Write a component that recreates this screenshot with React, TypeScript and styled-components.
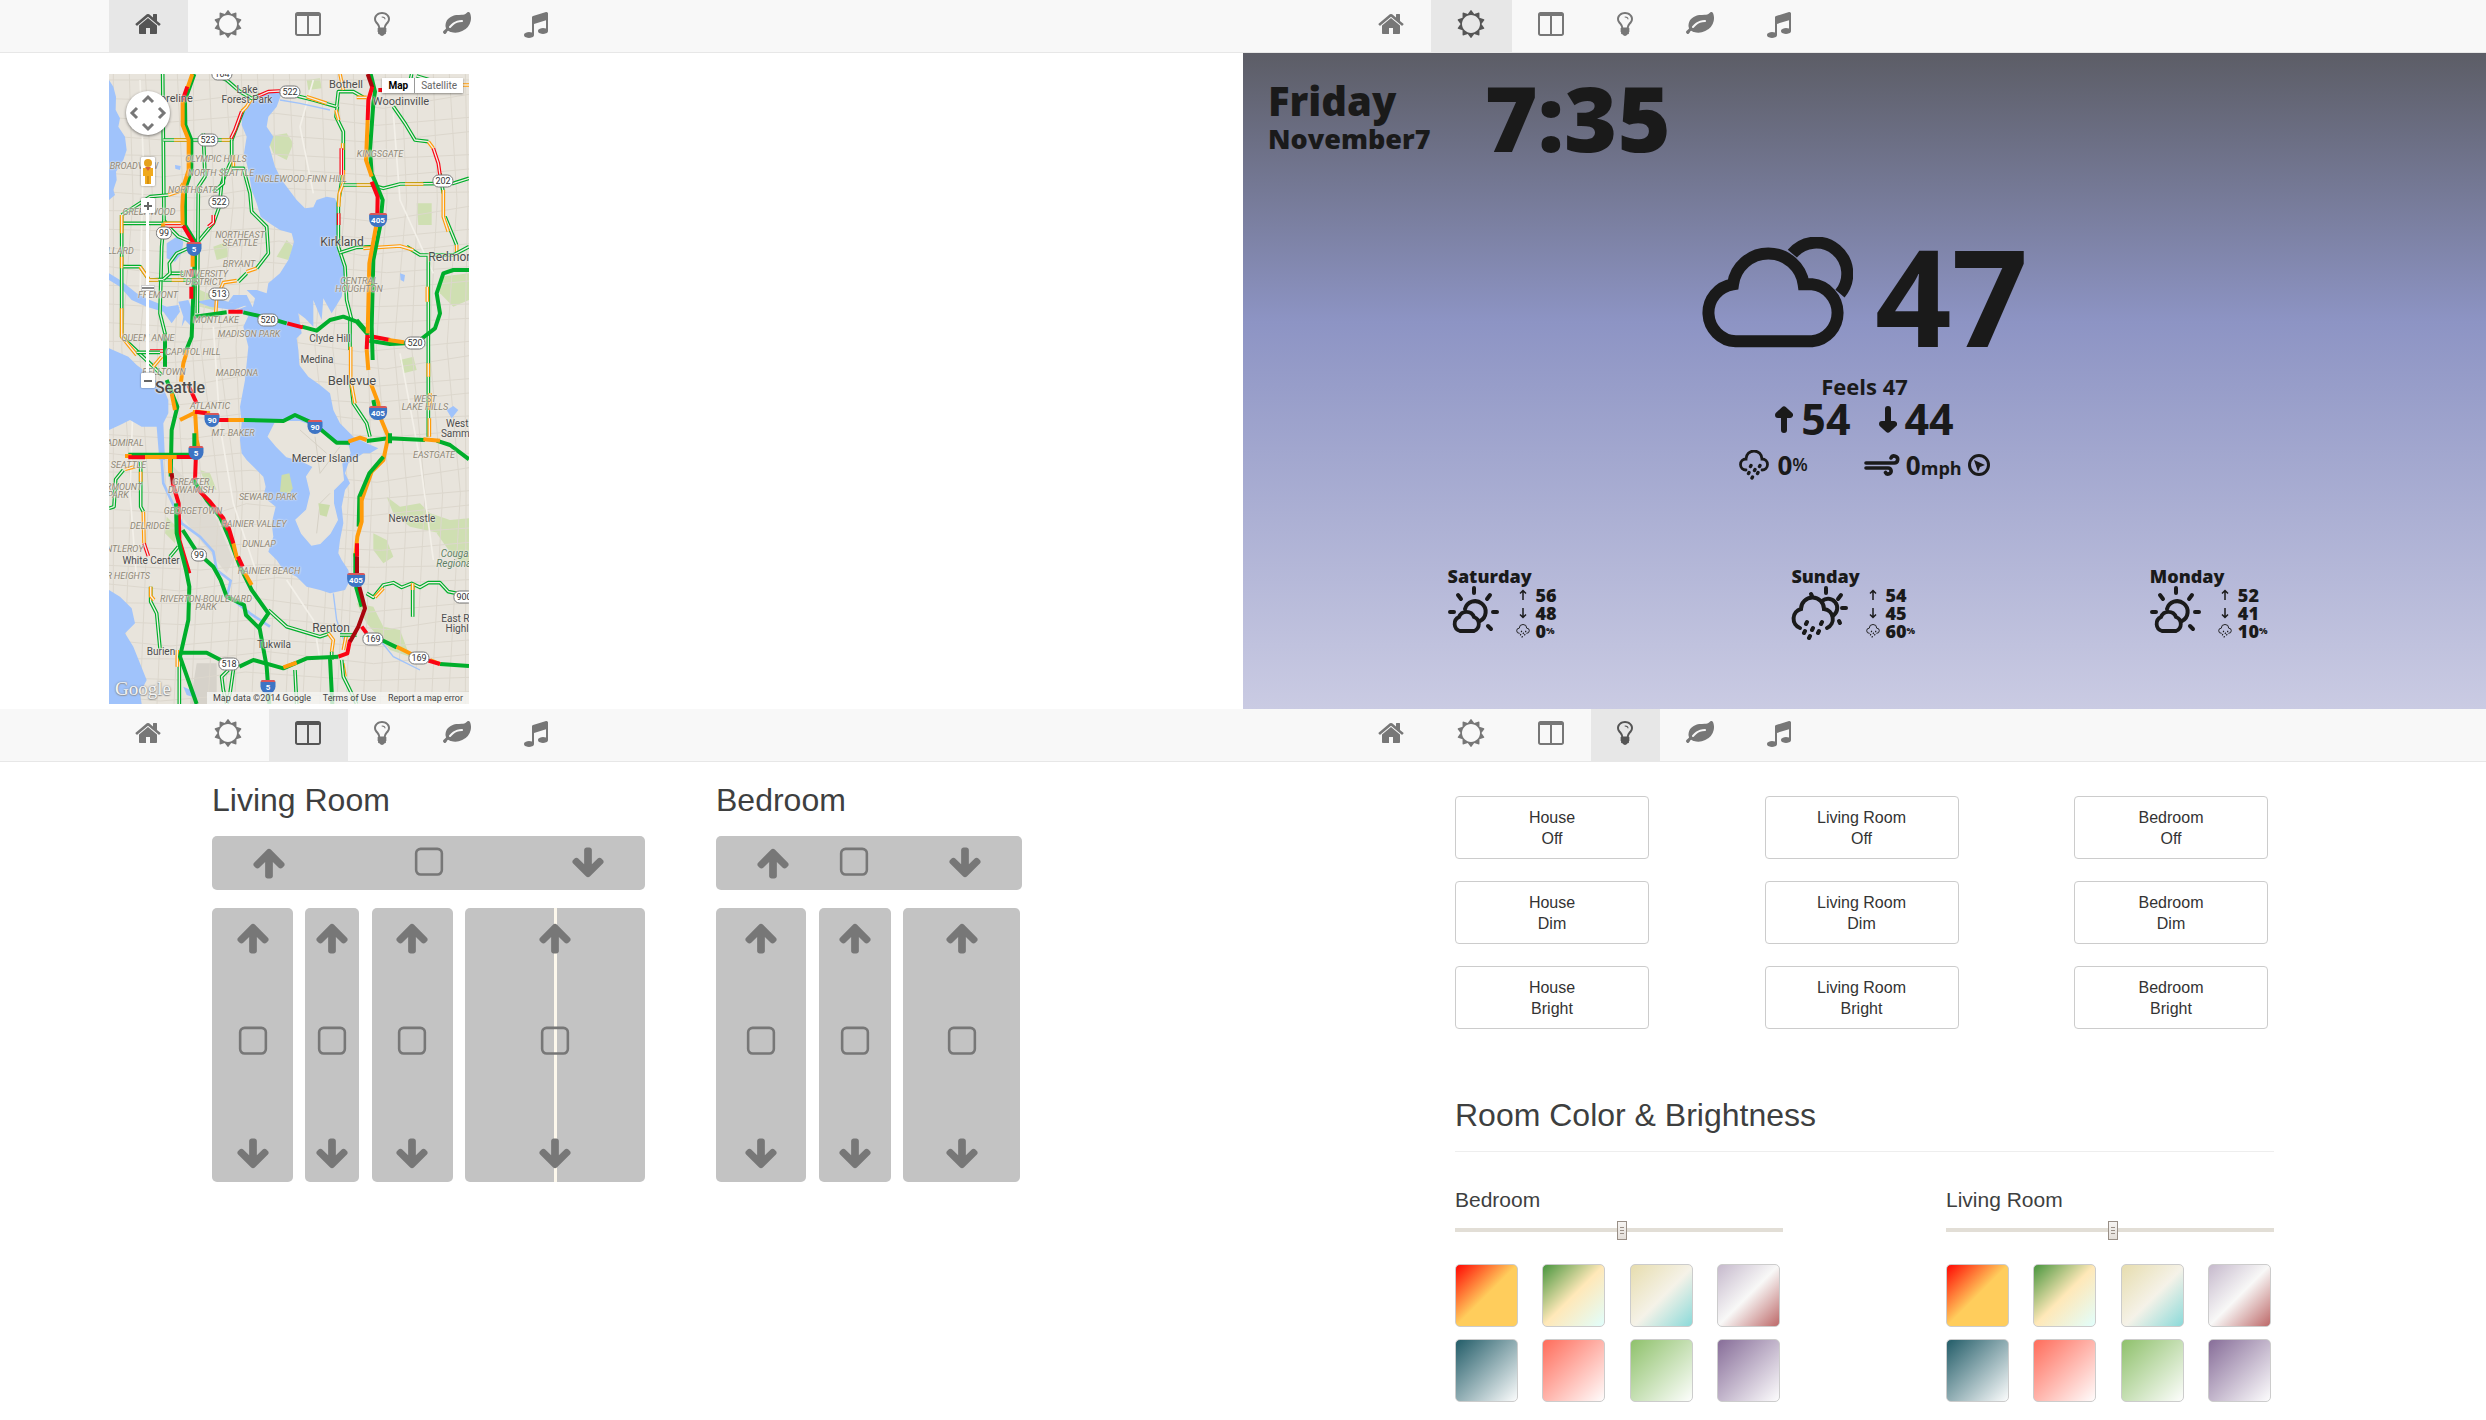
import React from "react";
import styled, { createGlobalStyle } from "styled-components";

const GlobalStyle = createGlobalStyle`
  *, *::before, *::after { box-sizing: border-box; }
  body {
    margin: 0;
    background: #fff;
    color: #3e3f3f;
    font-family: "Liberation Sans", Arial, sans-serif;
    font-size: 16px;
  }
  button { font: inherit; color: inherit; cursor: pointer; }
  h2, h3, p { margin: 0; font-weight: 400; }
`;

/* ---------- shared glyphs (1792-unit icon grid) ---------- */

const glyphs = {
  home: "M1472 992v480q0 26-19 45t-45 19h-384v-384h-256v384h-384q-26 0-45-19t-19-45v-480q0-1 .5-3t.5-3l575-474 575 474q1 2 1 6zm223-69l-62 74q-8 9-21 11h-3q-13 0-21-7l-692-577-692 577q-12 8-24 7-13-2-21-11l-62-74q-8-10-7-23.5t11-21.5l719-599q32-26 76-26t76 26l244 204v-195q0-14 9-23t23-9h192q14 0 23 9t9 23v408l219 182q10 8 11 21.5t-7 23.5z",
  sun: "M1472 896q0-117-45.5-223.5t-123-184-184-123-223.5-45.5-223.5 45.5-184 123-123 184-45.5 223.5 45.5 223.5 123 184 184 123 223.5 45.5 223.5-45.5 184-123 123-184 45.5-223.5zm276 277q-4 15-20 20l-292 96v306q0 16-13 26-15 10-29 4l-292-94-180 248q-10 13-26 13t-26-13l-180-248-292 94q-14 6-29-4-13-10-13-26v-306l-292-96q-16-5-20-20-5-17 4-29l180-248-180-248q-9-13-4-29 4-15 20-20l292-96v-306q0-16 13-26 15-10 29-4l292 94 180-248q9-12 26-12t26 12l180 248 292-94q14-6 29 4 13 10 13 26v306l292 96q16 5 20 20 5 16-4 29l-180 248 180 248q9 12 4 29z",
  columns: "M224 1536h608v-1152h-640v1120q0 13 9.5 22.5t22.5 9.5zm1376-32v-1120h-640v1152h608q13 0 22.5-9.5t9.5-22.5zm128-1216v1216q0 66-47 113t-113 47h-1344q-66 0-113-47t-47-113v-1216q0-66 47-113t113-47h1344q66 0 113 47t47 113z",
  bulb: "M1120 576q0 13-9.5 22.5t-22.5 9.5-22.5-9.5-9.5-22.5q0-46-54-71t-106-25q-13 0-22.5-9.5t-9.5-22.5 9.5-22.5 22.5-9.5q50 0 99.5 16t87 54 37.5 90zm160 0q0-72-34.5-134t-90-101.5-123-62-136.5-22.5-136.5 22.5-123 62-90 101.5-34.5 134q0 101 68 180 10 11 30.5 33t30.5 33q128 153 141 298h228q13-145 141-298 10-11 30.5-33t30.5-33q68-79 68-180zm128 0q0 155-103 268-45 49-74.5 87t-59.5 95.5-34 107.5q47 28 47 82 0 37-25 64 25 27 25 64 0 52-45 81 13 23 13 47 0 46-31.5 71t-77.5 25q-20 44-60 70t-87 26-87-26-60-70q-46 0-77.5-25t-31.5-71q0-24 13-47-45-29-45-81 0-37 25-64-25-27-25-64 0-54 47-82-4-50-34-107.5t-59.5-95.5-74.5-87q-103-113-103-268 0-99 44.5-184.5t117-142 164-89 186.5-32.5 186.5 32.5 164 89 117 142 44.5 184.5z",
  leaf: "M1280 704q0-26-19-45t-45-19q-172 0-318 49.5t-259.5 134-235.5 219.5q-19 21-19 45 0 26 19 45t45 19q24 0 45-19 27-24 74-71t67-66q137-124 268.5-176t313.5-52q26 0 45-19t19-45zm512-198q0 95-20 193-46 224-184.5 383t-357.5 268q-214 108-438 108-148 0-286-47-15-5-88-42t-96-37q-16 0-39.5 32t-45 70-52.5 70-60 32q-43 0-63.5-17.5t-45.5-59.5q-2-4-6-11t-5.5-10-3-9.5-1.5-13.5q0-35 31-73.5t68-65.5 68-56 31-48q0-4-14-38t-16-44q-9-51-9-104 0-115 43.5-220t119-184.5 170.5-139 204-95.5q55-18 145-25.5t179.5-9 178.5-6 163.5-24 113.5-56.5l29.5-29.5 29.5-28 27-20 36.5-16 43.5-4.5q39 0 70.5 46t47.5 112 24 124 8 96z",
  music: "M1664 224v1120q0 50-34 89t-86 60.5-103.5 32-96.5 10.5-96.5-10.5-103.5-32-86-60.5-34-89 34-89 86-60.5 103.5-32 96.5-10.5q105 0 192 39v-537l-768 237v709q0 50-34 89t-86 60.5-103.5 32-96.5 10.5-96.5-10.5-103.5-32-86-60.5-34-89 34-89 86-60.5 103.5-32 96.5-10.5q105 0 192 39v-967q0-31 19-56.5t49-35.5l832-256q12-4 28-4 40 0 68 28t28 68z",
  up: "M1675 971q0 51-37 90l-75 75q-38 38-91 38-54 0-90-38l-294-293v704q0 52-37.5 84.5t-90.5 32.5h-128q-53 0-90.5-32.5t-37.5-84.5v-704l-294 293q-36 38-90 38t-90-38l-75-75q-38-38-38-90 0-53 38-91l651-651q35-37 90-37 54 0 91 37l651 651q37 39 37 91z",
  down: "M1675 832q0 53-37 90l-651 652q-39 37-91 37-53 0-90-37l-651-652q-38-36-38-90 0-53 38-91l74-75q39-37 91-37 53 0 90 37l294 294v-704q0-52 38-90t90-38h128q52 0 90 38t38 90v704l294-294q37-37 90-37 52 0 91 37l75 75q37 39 37 91z",
  stop: "M1312 256h-832q-66 0-113 47t-47 113v832q0 66 47 113t113 47h832q66 0 113-47t47-113v-832q0-66-47-113t-113-47zm288 160v832q0 119-84.5 203.5t-203.5 84.5h-832q-119 0-203.5-84.5t-84.5-203.5v-832q0-119 84.5-203.5t203.5-84.5h832q119 0 203.5 84.5t84.5 203.5z",
};

type GlyphName = keyof typeof glyphs;

const Glyph = ({ name, size }: { name: GlyphName; size: number }) => (
  <svg width={size} height={size} viewBox="0 0 1792 1792" fill="currentColor" aria-hidden="true">
    <path d={glyphs[name]} />
  </svg>
);

/* ---------- page and navigation ---------- */

const Page = styled.main`
  display: grid;
  grid-template-columns: minmax(0, 1fr) minmax(0, 1fr);
  grid-template-rows: auto auto;
`;

const Panel = styled.section`
  display: flex;
  flex-direction: column;
`;

const NavBar = styled.nav`
  display: flex;
  padding-left: 109px;
  background: #f8f8f8;
  border-bottom: 1px solid #e7e7e7;
`;

const NavLink = styled.a<{ $active: boolean; $width: number }>`
  display: flex;
  justify-content: center;
  width: ${(p) => p.$width}px;
  padding: 10px 2px 14px 0;
  color: ${(p) => (p.$active ? "#555" : "#777")};
  background: ${(p) => (p.$active ? "#e7e7e7" : "transparent")};
`;

const navItems: { name: GlyphName; label: string; width: number }[] = [
  { name: "home", label: "Home", width: 79 },
  { name: "sun", label: "Weather", width: 81 },
  { name: "columns", label: "Shades", width: 79 },
  { name: "bulb", label: "Lights", width: 69 },
  { name: "leaf", label: "Climate", width: 81 },
  { name: "music", label: "Music", width: 77 },
];

const Nav = ({ active }: { active: GlyphName }) => (
  <NavBar>
    {navItems.map((item) => (
      <NavLink
        key={item.name}
        href={`#${item.name}`}
        aria-label={item.label}
        $active={item.name === active}
        $width={item.width}
      >
        <Glyph name={item.name} size={28} />
      </NavLink>
    ))}
  </NavBar>
);

/* ---------- traffic map ---------- */

const MapFrame = styled.div`
  position: relative;
  width: 360px;
  height: 630px;
  margin: 21px 0 5px 109px;
  overflow: hidden;
  background: #e8e4dc;
  font-family: Roboto, sans-serif;
`;

const MapDrawing = styled.svg`
  display: block;
  width: 100%;
  height: 100%;
`;

const Halo = "0 0 2px #f1eee8, 0 0 2px #f1eee8, 0 0 1px #f1eee8";

const PlaceLabel = styled.span<{ $x: number; $y: number; $size: number }>`
  position: absolute;
  left: ${(p) => p.$x}px;
  top: ${(p) => p.$y}px;
  transform: translate(-50%, -50%);
  color: #4c4c4c;
  font-size: ${(p) => p.$size}px;
  font-weight: ${(p) => (p.$size > 14 ? 500 : 400)};
  line-height: ${(p) => p.$size}px;
  text-align: center;
  text-shadow: ${Halo};
  white-space: pre;
`;

const HoodLabel = styled(PlaceLabel)`
  color: #8d8675;
  font-style: italic;
  line-height: 8px;
`;

const ParkLabel = styled(PlaceLabel)`
  color: #5d8064;
  font-style: italic;
`;

const StateShield = styled.span<{ $x: number; $y: number }>`
  position: absolute;
  left: ${(p) => p.$x}px;
  top: ${(p) => p.$y}px;
  transform: translate(-50%, -50%);
  padding: 0 2px;
  border: 1px solid #777;
  border-radius: 6px;
  background: #fff;
  color: #333;
  font-size: 9px;
  line-height: 11px;
  text-align: center;
`;

const InterstateShield = styled.span<{ $x: number; $y: number }>`
  position: absolute;
  left: ${(p) => p.$x}px;
  top: ${(p) => p.$y}px;
  transform: translate(-50%, -50%);
  min-width: 15px;
  padding: 1px 2px;
  border-top: 2px solid #d8575b;
  border-radius: 2px 2px 8px 8px;
  background: #3d74c4;
  color: #fff;
  font-size: 8px;
  font-weight: 700;
  line-height: 10px;
  text-align: center;
`;

const MapTypes = styled.div`
  position: absolute;
  top: 4px;
  right: 6px;
  display: flex;
  box-shadow: 0 1px 2px rgba(0, 0, 0, 0.4);
`;

const MapType = styled.button<{ $active: boolean }>`
  height: 15px;
  padding: 0 6px;
  border: 0;
  border-left: ${(p) => (p.$active ? "0" : "1px solid #999")};
  background: #fff;
  color: ${(p) => (p.$active ? "#000" : "#666")};
  font-size: 10px;
  font-weight: ${(p) => (p.$active ? 700 : 400)};
  line-height: 15px;
`;

const MapControls = styled.div`
  position: absolute;
  top: 17px;
  left: 17px;
  display: flex;
  flex-direction: column;
  align-items: center;
  width: 44px;
`;

const PanWheel = styled.button`
  display: block;
  width: 44px;
  height: 44px;
  margin-bottom: 22px;
  padding: 0;
  border: 0;
  border-radius: 50%;
  background: #fff;
  box-shadow: 0 1px 3px rgba(0, 0, 0, 0.5);
`;

const ControlButton = styled.button<{ $tall?: boolean }>`
  display: flex;
  align-items: center;
  justify-content: center;
  width: 14px;
  height: ${(p) => (p.$tall ? 29 : 15)}px;
  margin-bottom: ${(p) => (p.$tall ? 12 : 0)}px;
  padding: 0;
  border: 0;
  border-radius: 1px;
  background: #fff;
  box-shadow: 0 0 2px rgba(0, 0, 0, 0.5);
`;

const ZoomRange = styled.input`
  appearance: none;
  writing-mode: vertical-lr;
  direction: rtl;
  width: 14px;
  height: 160px;
  margin: 0;
  background: linear-gradient(to right, transparent 5px, #fff 5px, #fff 8px, transparent 8px);
  &::-webkit-slider-thumb {
    appearance: none;
    width: 14px;
    height: 6px;
    border: 1px solid #ccc;
    background: linear-gradient(#fff 1px, #888 1px, #888 3px, #fff 3px);
  }
`;

const GoogleMark = styled.span`
  position: absolute;
  left: 6px;
  bottom: 4px;
  color: #f4f4f4;
  font-family: "Liberation Serif", serif;
  font-size: 19px;
  line-height: 22px;
  text-shadow: 0 0 2px #777, 0 1px 1px #999;
`;

const Attribution = styled.div`
  position: absolute;
  right: 0;
  bottom: 0;
  left: 98px;
  display: flex;
  justify-content: space-between;
  padding: 0 6px;
  background: rgba(245, 245, 243, 0.8);
  color: #444;
  font-size: 9px;
  line-height: 12px;
  white-space: nowrap;
  a { color: inherit; text-decoration: none; }
`;

const G = "#00ae2b";
const O = "#ff9c0b";
const R = "#fa0414";
const D = "#a9060d";

// Local streets, drawn with a pale core between the two traffic lanes.
const arterials: [string, string][] = [
  [G, "M188 42L190 240 192 480 205 500 235 530 283 550"],
  [G, "M192 480L185 560 180 760 195 820 195 920"],
  [G, "M190 240H395"],
  [O, "M222 240H262M365 240H392"],
  [G, "M395 240V300L365 370 358 440 340 490 290 550"],
  [G, "M430 150L395 240"],
  [R, "M425 155L405 210 393 235M340 465V488L325 500"],
  [O, "M455 115L440 140 425 155M400 285V320"],
  [G, "M340 42L380 60 420 95 455 115 480 105M540 95L640 120 710 140 715 95 760 95 790 112"],
  [O, "M620 110L680 130M770 112H800"],
  [R, "M475 108L505 95 540 93"],
  [G, "M65 490H250M65 465V830L160 920 185 945M65 465L150 410 205 405"],
  [O, "M190 490H245M65 465V520M65 590V625M65 745V830L110 885M205 405L235 395 250 370"],
  [R, "M195 498H250M150 873H190"],
  [G, "M70 620H120L148 660 190 658M190 660H290M110 877H180M210 640H250"],
  [O, "M120 620L148 660 175 660M215 660H250M160 920L185 890"],
  [G, "M275 560L230 580 208 610 210 640 190 658"],
  [G, "M395 325H430L450 400 455 455 500 500 505 580 470 625M440 640L415 665M370 325V370L340 395M310 220L315 350 295 380 292 760"],
  [O, "M470 625L440 635M410 662L370 668 350 715 347 760"],
  [G, "M712 140L708 170 730 215 730 330 715 430 715 560 735 620 740 720 755 780"],
  [O, "M708 150L716 180M730 330V370L718 400 716 440M728 250V270"],
  [R, "M724 265V345M716 460V495"],
  [G, "M730 375H815L850 385 900 372 1060 370 1107 355"],
  [O, "M770 375H812M915 372H970"],
  [G, "M880 140L915 190 945 240 985 245M1020 340L1030 400M1035 470L1070 555"],
  [O, "M985 245L1000 265M1030 390V470L1045 515M1070 555V588"],
  [R, "M1000 265L1015 310 1020 345"],
  [G, "M720 578L770 562 830 560M920 560L960 585H1060L1107 560M985 585V960M985 960V1130"],
  [O, "M790 565L900 558 940 570M982 680V725M985 910V950M990 1000V1050M988 1075V1130"],
  [G, "M750 780V870M752 960L760 1030 800 1090 810 1130"],
  [O, "M752 860V960L765 1030"],
  [G, "M70 1230L47 1258 42 1340 27 1345M122 1205V1340L130 1355"],
  [O, "M75 1228L105 1220M122 1235V1265M130 1355L132 1450"],
  [R, "M132 1450L145 1488"],
  [G, "M152 1580V1625L170 1660 180 1765M238 1790V1932"],
  [O, "M152 1580V1608L162 1620M232 1770V1820"],
  [G, "M505 1650L560 1700 660 1730 690 1720M235 1460L210 1490"],
  [O, "M685 1720L700 1740 695 1775M740 1720L730 1770M728 1810L735 1850"],
  [G, "M725 1800L730 1850 745 1880 770 1932M695 1775V1800M585 1830L590 1932"],
  [G, "M385 1830L365 1850 370 1890 380 1932M400 1830L390 1900 380 1932"],
  [G, "M800 1600L820 1612 850 1575 880 1568 905 1582 935 1570 960 1582 985 1568 1020 1568 1045 1595 1070 1600M938 1575V1670"],
  [O, "M825 1612L850 1585M938 1570V1590"],
  [G, "M935 42L925 85M950 48L990 60"],
  [O, "M1050 75H1107M720 42L730 90"],
  [G, "M720 1725H770"],
];

// Freeways, solid bands.
const freeways: [string, string][] = [
  [G, "M283 42L255 120 256 195 274 240 274 330 255 390 255 495 288 550 284 600 280 700 275 830 255 880"],
  [O, "M277 42L262 85M248 120V195L266 240V330L250 380 247 440 248 495M278 580V620M262 870L250 910 243 965"],
  [R, "M262 80L248 120M250 497L280 548M275 628V650M274 680V716M265 975L290 1030"],
  [G, "M200 960L232 1040 215 1110 212 1250M195 820V920"],
  [O, "M190 490L187 520M215 1000L225 1050M210 1185V1240M285 1050L290 1140 296 1165"],
  [D, "M215 1240L220 1280"],
  [R, "M218 1270L236 1330 238 1440 268 1540"],
  [G, "M228 1330L230 1420 258 1530 268 1580 265 1680 240 1790 290 1932"],
  [G, "M85 1184H290M283 1120V1190"],
  [O, "M135 1191H240M95 1188H75"],
  [R, "M85 1192H135M230 1191H285M288 1180L285 1260"],
  [G, "M280 1260L320 1320 360 1370 390 1440 420 1520 455 1590 505 1660 478 1700 500 1820 508 1932"],
  [R, "M290 1285L330 1325 370 1375 385 1410"],
  [O, "M400 1450L412 1500M435 1540L455 1575"],
  [R, "M385 1400L400 1450M414 1490L428 1520"],
  [G, "M248 1410L290 1475 340 1520 362 1560 380 1610 432 1635 438 1665 478 1705"],
  [O, "M240 1080L290 1055 330 1060"],
  [R, "M285 1055L320 1060M345 1080H390"],
  [O, "M385 1080H435"],
  [G, "M432 1080L550 1083 585 1065 640 1090 710 1148 750 1148M800 1143L865 1135 975 1140M1010 1142L1050 1155 1107 1198"],
  [O, "M745 1145L780 1133 800 1140M970 1138L1020 1142"],
  [G, "M285 770L380 757M430 757L510 775 560 790M605 800L650 812 690 780 730 770 770 785 805 825M808 842L870 852 915 850M960 840L1005 805 1020 760 1010 700 1030 640 1060 630H1107"],
  [R, "M385 755H428M562 790L608 802M808 828L870 840"],
  [O, "M865 840L912 847"],
  [G, "M812 42L825 95 820 130 810 270 815 340 848 420 840 500 820 600 815 800 818 900M770 780L805 820"],
  [D, "M803 42L817 82"],
  [R, "M817 80L805 120 803 180M815 365L833 410 832 465"],
  [O, "M803 180L798 300 815 350M828 500L808 610 803 820"],
  [R, "M802 825L800 868"],
  [O, "M800 868L805 930M813 972L835 1030 840 1070 865 1130 850 1200 815 1235 785 1320"],
  [G, "M820 1020L828 1060M850 1190L808 1240 778 1310 776 1400M870 1120V1150"],
  [O, "M785 1310V1385L772 1430 766 1490"],
  [G, "M766 1480V1550M768 1580L785 1640"],
  [R, "M771 1450V1490M785 1700L800 1720M715 1790L742 1780 750 1740"],
  [D, "M771 1490V1560M778 1580L795 1645 775 1700 750 1745"],
  [G, "M240 1778H320L385 1812M418 1820L460 1800 550 1825 620 1795 715 1790M690 1795L697 1932"],
  [O, "M550 1822L590 1808"],
  [G, "M845 1740L890 1762M930 1785L960 1800M1020 1812L1107 1818"],
  [O, "M890 1760L940 1785M990 1800L1020 1812"],
  [R, "M985 1802L1020 1812M835 90H855"],
];

const greens = [
  "M500 230L560 220 580 250 560 300 520 280Z",
  "M130 120L160 110 170 160 140 170Z",
  "M860 1310L900 1340 960 1330 990 1360 1050 1380 1107 1375V1440L1020 1420 930 1400 880 1360Z",
  "M1020 650L1107 640V720L1060 740 1020 700Z",
  "M950 430H995V495H955Z",
  "M1010 1420L1060 1400 1107 1430V1520L1060 1490Z",
  "M820 1420L860 1440 880 1490 850 1510 820 1470Z",
  "M300 690L370 720 340 750 300 740Z",
  "M440 920L470 930 480 970 450 980Z",
  "M770 1630L820 1640 850 1700 900 1710 930 1790 870 1770 800 1690Z",
  "M200 1370L230 1400 225 1450 195 1420Z",
  "M340 560L380 545 385 590 350 600Z",
  "M560 540L580 560 565 600 530 590Z",
  "M900 900L940 890 950 930 910 940Z",
  "M300 1230L330 1240 350 1290 320 1280Z",
  "M620 60L660 55 665 85 625 90Z",
];

const water = [
  "M27 60L40 80 48 110 47 150 60 175 55 200 75 230 80 270 70 300 48 335 50 360 40 390 45 405 27 420Z",
  "M450 130L427 160 425 195 440 230 432 280 445 330 455 390 470 430 482 470 512 492 540 510 575 520 582 545 575 570 565 600 540 640 505 670 500 700 470 690 440 690 465 715 458 742 440 705 400 705 385 725 440 738 405 752 445 768 430 800 445 860 435 960 420 1040 425 1090 420 1140 425 1180 440 1200 462 1222 490 1250 497 1280 490 1310 527 1340 515 1390 520 1430 505 1475 530 1500 550 1530 590 1550 620 1580 660 1590 690 1600 735 1590 750 1560 745 1530 725 1500 715 1480 720 1440 730 1390 725 1340 735 1290 750 1270 735 1240 745 1210 790 1180 810 1180 835 1165 800 1150 760 1130 720 1090 700 1050 690 1000 660 975 625 950 598 915 595 870 590 835 605 820 595 760 615 775 640 800 640 720 665 780 670 715 695 760 725 710 735 640 728 600 713 580 718 520 712 480 715 440 705 415 680 410 650 420 640 442 615 445 590 420 545 360 525 320 508 260 520 230 500 200 505 170 530 140 545 100 510 95 480 115Z",
  "M200 550L230 530 250 545 245 580 225 605 200 595Z",
  "M235 725L265 720 280 760 275 800 255 780 245 800 250 770Z",
  "M27 640L60 660 110 700 150 720 200 740 235 735 240 755 215 790 190 755 140 740 95 720 60 680 27 660Z",
  "M290 725L345 715 385 725 440 735 400 750 330 740Z",
  "M27 865L85 890 110 915 150 945 190 985 205 1020 205 1060 190 1090 195 1200 178 1200 170 1100 145 1100 125 1100 90 1080 60 1095 27 1110Z",
  "M27 1590L60 1610 95 1645 105 1690 75 1720 100 1760 140 1860 120 1900 125 1932H27Z",
  "M1040 1050L1060 1038 1075 1050 1055 1075Z",
  "M225 315L242 318 240 330 226 326Z",
  "M900 640L915 645 912 665 902 660Z",
  "M250 1880L285 1895 290 1915 260 1905Z",
];

const islands = [
  "M505 1130L525 1090 560 1085 600 1085 640 1100 670 1120 700 1150 745 1158 750 1180 725 1210 730 1260 700 1290 700 1330 712 1380 690 1420 660 1450 635 1455 605 1420 588 1380 620 1350 632 1300 620 1250 640 1220 600 1200 560 1190 530 1160Z",
];

const minorRows = Array.from({ length: 34 }, (_, i) => {
  const y = 60 + i * 56;
  return `M27 ${y}L${180 + ((i * 97) % 160)} ${y + ((i * 31) % 24)} ${420 + ((i * 53) % 120)} ${y - ((i * 17) % 22)} ${780 + ((i * 71) % 90)} ${y + ((i * 29) % 34)} 1107 ${y - ((i * 13) % 26)}`;
}).join("");

const minorColumns = Array.from({ length: 23 }, (_, i) => {
  const x = 40 + i * 48;
  return `M${x} 42L${x + ((i * 37) % 26)} 420 ${x - ((i * 23) % 28)} 860 ${x + ((i * 41) % 36)} 1300 ${x - ((i * 19) % 22)} 1932`;
}).join("");

// Feature coordinates are surveyed at three units per screen pixel.
const place = (x: number, y: number) => ({
  $x: Math.round((x - 27) / 3),
  $y: Math.round((y - 42) / 3),
});

const towns: [string, number, number, number][] = [
  ["Shoreline", 210, 114, 11],
  ["Lake\nForest Park", 442, 106, 10],
  ["Bothell", 739, 72, 11],
  ["Woodinville", 904, 122, 11],
  ["Kirkland", 726, 547, 12],
  ["Redmond", 1062, 592, 12],
  ["Clyde Hill", 689, 838, 10],
  ["Medina", 651, 899, 10],
  ["Bellevue", 757, 961, 13],
  ["Seattle", 241, 984, 16],
  ["Mercer Island", 674, 1193, 11],
  ["Newcastle", 935, 1376, 10],
  ["West Lake\nSammamish", 1106, 1108, 10],
  ["White Center", 152, 1502, 10],
  ["Renton", 692, 1703, 12],
  ["Tukwila", 521, 1754, 10],
  ["Burien", 183, 1775, 10],
  ["East Renton\nHighlands", 1104, 1691, 10],
];

const hoods: [string, number, number][] = [
  ["BROADVIEW", 103, 317],
  ["OLYMPIC HILLS", 349, 298],
  ["NORTH SEATTLE", 363, 339],
  ["NORTHGATE", 278, 390],
  ["INGLEWOOD-FINN HILL", 602, 358],
  ["KINGSGATE", 840, 283],
  ["GREENWOOD", 147, 457],
  ["NORTHEAST\nSEATTLE", 421, 537],
  ["BALLARD", 44, 573],
  ["BRYANT", 418, 612],
  ["UNIVERSITY\nDISTRICT", 311, 655],
  ["FREMONT", 173, 706],
  ["CENTRAL\nHOUGHTON", 778, 674],
  ["MONTLAKE", 347, 779],
  ["MADISON PARK", 447, 822],
  ["QUEEN ANNE", 144, 834],
  ["CAPITOL HILL", 280, 875],
  ["BELLTOWN", 191, 937],
  ["MADRONA", 410, 940],
  ["ATLANTIC", 330, 1039],
  ["WEST\nLAKE HILLS", 974, 1030],
  ["MT. BAKER", 398, 1120],
  ["ADMIRAL", 75, 1150],
  ["EASTGATE", 1003, 1186],
  ["WEST SEATTLE", 48, 1214],
  ["FAIRMOUNT\nPARK", 54, 1292],
  ["GREATER\nDUWAMISH", 272, 1278],
  ["SEWARD PARK", 505, 1312],
  ["GEORGETOWN", 280, 1352],
  ["DELRIDGE", 151, 1398],
  ["RAINIER VALLEY", 463, 1393],
  ["DUNLAP", 477, 1452],
  ["FAUNTLEROY", 50, 1466],
  ["RAINIER BEACH", 508, 1533],
  ["ARBOR HEIGHTS", 52, 1549],
  ["RIVERTON-BOULEVARD\nPARK", 318, 1629],
];

const stateRoutes: [string, number, number][] = [
  ["104", 365, 42],
  ["522", 569, 96],
  ["523", 325, 241],
  ["522", 358, 427],
  ["99", 191, 519],
  ["202", 1030, 362],
  ["513", 358, 702],
  ["520", 503, 780],
  ["520", 945, 848],
  ["99", 297, 1486],
  ["518", 387, 1812],
  ["169", 819, 1737],
  ["169", 958, 1794],
  ["900", 1092, 1611],
];

const interstates: [string, number, number][] = [
  ["5", 283, 567],
  ["405", 835, 480],
  ["405", 835, 1060],
  ["90", 337, 1080],
  ["90", 644, 1101],
  ["5", 288, 1180],
  ["405", 768, 1560],
  ["5", 503, 1880],
];

const TrafficMap = () => (
  <MapFrame>
    <MapDrawing viewBox="27 42 1080 1890" fill="none" aria-label="Seattle traffic map">
      {greens.map((d) => <path key={d} d={d} fill="#cfdfb2" />)}
      <path d="M290 1810H350V1932H270Z" fill="#d6d2ca" />
      <path d="M200 1200L330 1330 400 1500 380 1540 300 1440 215 1330Z" fill="#dedad2" />
      <path d={minorRows + minorColumns} stroke="#dcd7cd" strokeWidth="3" />
      <path d="M340 800L360 1100 400 1330 470 1540M640 60L600 200 640 400M880 160L900 420 1000 640M900 880L960 1200 1000 1500M560 1560L640 1680 660 1800M100 1000L90 1300 110 1560M120 60L130 300 120 700" stroke="#f3f0e9" strokeWidth="5" />
      {water.map((d) => <path key={d} d={d} fill="#a0c3fb" />)}
      {islands.map((d) => <path key={d} d={d} fill="#e8e4dc" stroke="#e8e4dc" strokeWidth="4" />)}
      <path d="M645 1130L660 1240 720 1160M650 1420L660 1330 690 1300M600 1110L680 1180" stroke="#d6d1c6" strokeWidth="3" />
      <path d="M545 1245L568 1240 578 1285 570 1300 540 1295Z" fill="#cbdcaa" />
      <path d="M655 1330L690 1335 680 1370 660 1365Z" fill="#cbdcaa" />
      <path d="M185 1200L190 1270 218 1330 245 1390 300 1430 340 1475 350 1530 392 1562 382 1605 450 1660 510 1700" stroke="#a0c3fb" strokeWidth="8" />
      <path d="M700 1600L710 1680 735 1750M840 1740L880 1790 960 1830M540 120L600 130 690 150M930 40L960 90" stroke="#a0c3fb" strokeWidth="4" />
      {arterials.map(([color, d]) => (
        <g key={d} strokeLinejoin="round">
          <path d={d} stroke={color} strokeWidth="11" />
          <path d={d} stroke="#f2efe8" strokeWidth="4" />
        </g>
      ))}
      {freeways.map(([color, d]) => (
        <path key={d} d={d} stroke={color} strokeWidth="12" strokeLinejoin="round" />
      ))}
    </MapDrawing>
    {hoods.map(([name, x, y]) => (
      <HoodLabel key={name} {...place(x, y)} $size={9}>{name}</HoodLabel>
    ))}
    <ParkLabel {...place(1098, 1497)} $size={10}>{"Cougar Mtn\nRegional Park"}</ParkLabel>
    {towns.map(([name, x, y, size]) => (
      <PlaceLabel key={name} {...place(x, y)} $size={size}>{name}</PlaceLabel>
    ))}
    {stateRoutes.map(([name, x, y]) => (
      <StateShield key={`${x}-${y}`} {...place(x, y)}>{name}</StateShield>
    ))}
    {interstates.map(([name, x, y]) => (
      <InterstateShield key={`${x}-${y}`} {...place(x, y)}>{name}</InterstateShield>
    ))}
    <MapTypes>
      <MapType type="button" $active>Map</MapType>
      <MapType type="button" $active={false}>Satellite</MapType>
    </MapTypes>
    <MapControls>
      <PanWheel type="button" aria-label="Pan">
        <svg width="44" height="44" viewBox="0 0 44 44" fill="none" stroke="#777" strokeWidth="3">
          <path d="M17 11l5-5 5 5M17 33l5 5 5-5M11 17l-5 5 5 5M33 17l5 5-5 5" />
        </svg>
      </PanWheel>
      <ControlButton type="button" aria-label="Street view" $tall>
        <svg width="12" height="25" viewBox="0 0 12 25">
          <circle cx="6" cy="4" r="4" fill="#e5a11c" />
          <path d="M1 9h10v8H9v8H3v-8H1z" fill="#f0aa1d" />
          <path d="M3 8l3 4 3-4z" fill="#d9623a" />
          <path d="M6 17v8" stroke="#b87708" />
        </svg>
      </ControlButton>
      <ControlButton type="button" aria-label="Zoom in">
        <svg width="8" height="8" viewBox="0 0 8 8" stroke="#666" strokeWidth="2"><path d="M0 4h8M4 0v8" /></svg>
      </ControlButton>
      <ZoomRange type="range" aria-label="Zoom level" defaultValue={53} />
      <ControlButton type="button" aria-label="Zoom out">
        <svg width="8" height="8" viewBox="0 0 8 8" stroke="#666" strokeWidth="2"><path d="M0 4h8" /></svg>
      </ControlButton>
    </MapControls>
    <GoogleMark>Google</GoogleMark>
    <Attribution>
      <span>Map data ©2014 Google</span>
      <a href="#terms">Terms of Use</a>
      <a href="#report">Report a map error</a>
    </Attribution>
  </MapFrame>
);

/* ---------- weather ---------- */

const WeatherBody = styled.div`
  display: flex;
  flex: 1;
  flex-direction: column;
  padding: 18px 25px 0;
  background: linear-gradient(#5c5d66 0%, #8d94c4 41%, #cacbe3 100%);
  color: #1a1a1a;
  font-family: "Open Sans", sans-serif;
  font-weight: 800;
`;

const ClockRow = styled.header`
  display: flex;
  gap: 54px;
  margin-bottom: 74px;
`;

const DateBlock = styled.div`
  padding-top: 8px;
`;

const Weekday = styled.p`
  font-size: 40px;
  font-weight: 800;
  line-height: 44px;
`;

const MonthDay = styled.p`
  font-size: 27px;
  font-weight: 800;
  line-height: 32px;
`;

const Clock = styled.time`
  font-size: 91px;
  line-height: 92px;
`;

const CurrentRow = styled.div`
  display: flex;
  align-items: flex-end;
  justify-content: center;
  gap: 22px;
  height: 112px;
  margin-bottom: 24px;
  font-size: 134px;
  font-weight: 700;
  line-height: 108px;
`;

const Feels = styled.p`
  font-size: 22px;
  font-weight: 700;
  line-height: 27px;
  text-align: center;
`;

const HighLow = styled.div`
  display: flex;
  justify-content: center;
  gap: 28px;
  margin-bottom: 11px;
  font-size: 43px;
  font-weight: 700;
  line-height: 38px;
`;

const Reading = styled.span<{ $gap: number }>`
  display: flex;
  align-items: center;
  gap: ${(p) => p.$gap}px;
`;

const Conditions = styled.div`
  display: flex;
  justify-content: center;
  gap: 56px;
  margin-bottom: 85px;
  font-size: 26px;
  font-weight: 700;
  line-height: 32px;
`;

const Unit = styled.small<{ $raised?: boolean }>`
  font-size: 18px;
  font-weight: ${(p) => (p.$raised ? 600 : 700)};
  line-height: 1;
  vertical-align: ${(p) => (p.$raised ? "4px" : "baseline")};
`;

const Forecast = styled.div`
  display: flex;
  justify-content: space-between;
  width: 834px;
  max-width: 100%;
  margin: 0 auto;
  padding: 0 14px 69px 0;
`;

const Day = styled.article`
  font-size: 18px;
  line-height: 18px;
`;

const DayName = styled.h3`
  font-size: 18px;
  font-weight: 800;
  line-height: 20px;
`;

const DayBody = styled.div`
  display: flex;
  gap: 16px;
`;

const DayReadings = styled.div`
  display: grid;
  grid-template-columns: 17px auto;
  grid-auto-rows: 18px;
  column-gap: 4px;
  align-items: center;
  justify-items: center;
  & > span { justify-self: start; }
`;

const TinyUnit = styled.small`
  font-size: 9px;
  line-height: 1;
  vertical-align: 4px;
`;

const CloudBig = () => (
  <svg width="152" height="112" viewBox="126 80 456 336" fill="none" stroke="currentColor" strokeWidth="36">
    <path d="M230 393A86 86 0 0 1 222 222A107 107 0 0 1 434 222H459A86 86 0 0 1 459 393Z" />
    <path d="M400 130A92 92 0 0 1 543 250" />
  </svg>
);

const RainCloud = ({ width, height, stroke }: { width: number; height: number; stroke: number }) => (
  <svg width={width} height={height} viewBox="0 0 30 30" fill="none" stroke="currentColor" strokeWidth={stroke} strokeLinecap="round">
    <path d="M7 20A5.500 5.500 0 0 1 7 9A8 8 0 0 1 23 9A5.500 5.500 0 0 1 23 20" />
    <path d="M12 15.500l-.5 1M21 15.500l-.5 1M16 19.500l-.5 1M10 22.500l-.5 1M19 22.500l-.5 1M13.500 27l-.5 1" strokeWidth={stroke + 0.6} />
  </svg>
);

const WindIcon = () => (
  <svg width="36" height="22" viewBox="0 0 36 22" fill="none" stroke="currentColor" strokeWidth="3.600" strokeLinecap="round">
    <path d="M2 9h28a3.500 3.500 0 1 0-3-5" />
    <path d="M2 14h22a3 3 0 1 1-2.500 4.500" />
  </svg>
);

const Compass = () => (
  <svg width="22" height="22" viewBox="0 0 22 22" fill="none" stroke="currentColor" strokeWidth="3">
    <circle cx="11" cy="11" r="9.500" />
    <path d="M6 6l11 5-5 2-2 5z" fill="currentColor" stroke="none" />
  </svg>
);

const ThickArrow = ({ down }: { down?: boolean }) => (
  <svg width="18" height="27" viewBox="0 0 18 27" fill="none" stroke="currentColor" strokeWidth="6" strokeLinecap="round" strokeLinejoin="round">
    {down ? <path d="M9 3v19M3 18l6 5.500 6-5.500z" /> : <path d="M9 24V5M3 9l6-5.500 6 5.500z" />}
  </svg>
);

const ThinArrow = ({ down }: { down?: boolean }) => (
  <svg width="8" height="12" viewBox="0 0 8 12" fill="none" stroke="currentColor" strokeWidth="1.500">
    {down ? <path d="M4 1v9M1 7.500l3 3 3-3" /> : <path d="M4 11V2M1 4.500l3-3 3 3" />}
  </svg>
);

const SunCloud = () => (
  <svg width="51" height="50" viewBox="0 0 51 50" fill="none" stroke="currentColor" strokeWidth="4" strokeLinecap="round">
    <path d="M26 2v5M10 9l3 4M42 9l-3 4M2 26h4M45 26h4M40 40l3 3" />
    <path d="M17 23a10.500 10.500 0 1 1 15 12" />
    <path d="M12 45a7.500 7.500 0 0 1-1-14 8 8 0 0 1 15 0 7.500 7.500 0 0 1 0 14z" strokeWidth="3.800" />
  </svg>
);

const SunRain = () => (
  <svg width="57" height="54" viewBox="0 0 57 54" fill="none" stroke="currentColor" strokeWidth="4" strokeLinecap="round">
    <path d="M35 2v5M20 8l1 2M50 9l-3 4M51 22h4M48 35l1 2" />
    <path d="M31 15a9 9 0 1 1 12 14" />
    <path d="M9 42a10 10 0 0 1 1-19 11.500 11.500 0 0 1 23 0 10 10 0 0 1 3 19" />
    <path d="M16 36l-1 2M31 36l-1 2M22 42l-1 2M14 45l-1 2M28 45l-1 2M19 50l-1 2" />
  </svg>
);

const days = [
  { name: "Saturday", high: 56, low: 48, rain: 0, Icon: SunCloud },
  { name: "Sunday", high: 54, low: 45, rain: 60, Icon: SunRain },
  { name: "Monday", high: 52, low: 41, rain: 10, Icon: SunCloud },
];

const Weather = () => (
  <WeatherBody>
    <ClockRow>
      <DateBlock>
        <Weekday>Friday</Weekday>
        <MonthDay>November7</MonthDay>
      </DateBlock>
      <Clock>7:35</Clock>
    </ClockRow>
    <CurrentRow>
      <CloudBig />
      <span>47</span>
    </CurrentRow>
    <Feels>Feels 47</Feels>
    <HighLow>
      <Reading $gap={8}><ThickArrow />54</Reading>
      <Reading $gap={8}><ThickArrow down />44</Reading>
    </HighLow>
    <Conditions>
      <Reading $gap={8}>
        <RainCloud width={30} height={30} stroke={2.8} />
        <span>0<Unit $raised>%</Unit></span>
      </Reading>
      <Reading $gap={6}>
        <WindIcon />
        <span>0<Unit>mph</Unit></span>
        <Compass />
      </Reading>
    </Conditions>
    <Forecast>
      {days.map(({ name, high, low, rain, Icon }) => (
        <Day key={name}>
          <DayName>{name}</DayName>
          <DayBody>
            <Icon />
            <DayReadings>
              <ThinArrow /><span>{high}</span>
              <ThinArrow down /><span>{low}</span>
              <RainCloud width={16} height={14} stroke={2} /><span>{rain}<TinyUnit>%</TinyUnit></span>
            </DayReadings>
          </DayBody>
        </Day>
      ))}
    </Forecast>
  </WeatherBody>
);

/* ---------- shades ---------- */

const Rooms = styled.div`
  display: flex;
  gap: 71px;
  padding: 19px 24px 0 212px;
`;

const RoomTitle = styled.h2`
  margin-bottom: 17px;
  color: #3e3f3f;
  font-size: 32px;
  line-height: 38px;
`;

const ShadeRoom = styled.section<{ $width: number }>`
  width: ${(p) => p.$width}px;
`;

const ShadeBar = styled.div`
  display: grid;
  grid-template-columns: 114px 1fr 114px;
  align-items: center;
  justify-items: center;
  height: 54px;
  margin-bottom: 18px;
  border-radius: 5px;
  background: #c3c3c3;
`;

const ShadeColumns = styled.div<{ $inset: number }>`
  display: flex;
  justify-content: space-between;
  padding-right: ${(p) => p.$inset}px;
`;

const ShadeColumn = styled.div<{ $width: number; $split?: boolean }>`
  display: flex;
  flex-direction: column;
  align-items: center;
  justify-content: space-between;
  width: ${(p) => p.$width}px;
  height: 274px;
  padding: 12px 0 10px;
  border-radius: 5px;
  background: ${(p) =>
    p.$split
      ? "linear-gradient(90deg, #c3c3c3 calc(50% - 1px), #fdf8ec calc(50% - 1px), #fdf8ec calc(50% + 2px), #c3c3c3 calc(50% + 2px))"
      : "#c3c3c3"};
`;

const ShadeButton = styled.button<{ $lift?: boolean; $start?: boolean }>`
  display: flex;
  justify-self: ${(p) => (p.$start ? "start" : "center")};
  margin: 0 ${(p) => (p.$start ? 6 : 0)}px ${(p) => (p.$lift ? 8 : 0)}px;
  padding: 0;
  border: 0;
  background: none;
  color: #777;
`;

const shadeRooms = [
  { name: "Living Room", width: 433, columns: [81, 54, 81, 180], inset: 0, splitLast: true, stopStart: false },
  { name: "Bedroom", width: 306, columns: [90, 72, 117], inset: 2, splitLast: false, stopStart: true },
];

const Shades = () => (
  <Rooms>
    {shadeRooms.map((room) => (
      <ShadeRoom key={room.name} $width={room.width}>
        <RoomTitle>{room.name}</RoomTitle>
        <ShadeBar>
          <ShadeButton type="button" aria-label="Raise all"><Glyph name="up" size={36} /></ShadeButton>
          <ShadeButton type="button" aria-label="Stop all" $start={room.stopStart}><Glyph name="stop" size={36} /></ShadeButton>
          <ShadeButton type="button" aria-label="Lower all"><Glyph name="down" size={36} /></ShadeButton>
        </ShadeBar>
        <ShadeColumns $inset={room.inset}>
          {room.columns.map((width, i) => (
            <ShadeColumn key={i} $width={width} $split={room.splitLast && i === room.columns.length - 1}>
              <ShadeButton type="button" aria-label="Raise"><Glyph name="up" size={36} /></ShadeButton>
              <ShadeButton type="button" aria-label="Stop" $lift><Glyph name="stop" size={36} /></ShadeButton>
              <ShadeButton type="button" aria-label="Lower"><Glyph name="down" size={36} /></ShadeButton>
            </ShadeColumn>
          ))}
        </ShadeColumns>
      </ShadeRoom>
    ))}
  </Rooms>
);

/* ---------- lights ---------- */

const LightsBody = styled.div`
  padding: 34px 212px 18px;
`;

const SceneGrid = styled.div`
  display: grid;
  grid-template-columns: repeat(3, 194px);
  justify-content: space-between;
  row-gap: 22px;
  margin-bottom: 67px;
  padding-right: 6px;
`;

const SceneButton = styled.button`
  height: 63px;
  padding: 0 12px;
  border: 1px solid #ccc;
  border-radius: 4px;
  background: #fff;
  color: #333;
  font-size: 16px;
  line-height: 21px;
  white-space: pre-line;
`;

const SectionTitle = styled.h2`
  margin-bottom: 35px;
  padding-bottom: 17px;
  border-bottom: 1px solid #eee;
  color: #3e3f3f;
  font-size: 32px;
  line-height: 38px;
`;

const LightRooms = styled.div`
  display: flex;
  justify-content: space-between;
`;

const LightRoom = styled.div`
  width: 328px;
`;

const RoomLabel = styled.label`
  display: block;
  margin-bottom: 7px;
  color: #3e3f3f;
  font-size: 21px;
  line-height: 26px;
`;

const Brightness = styled.input`
  appearance: none;
  display: block;
  width: 100%;
  height: 21px;
  margin: 0 0 23px;
  background: linear-gradient(transparent 8px, #e2ded6 8px, #e2ded6 12px, transparent 12px);
  &::-webkit-slider-thumb {
    appearance: none;
    width: 10px;
    height: 19px;
    border: 1px solid #998f87;
    background:
      linear-gradient(#998f87 1px, transparent 1px, transparent 3px, #998f87 3px, #998f87 4px, transparent 4px, transparent 6px, #998f87 6px) center / 4px 7px no-repeat,
      linear-gradient(#f6f4f2, #e4dfda);
  }
`;

const Swatches = styled.div`
  display: grid;
  grid-template-columns: repeat(4, 63px);
  justify-content: space-between;
  row-gap: 12px;
  padding-right: 3px;
`;

const Swatch = styled.button<{ $fill: string }>`
  height: 63px;
  padding: 0;
  border: 1px solid #ccc;
  border-radius: 5px;
  background: linear-gradient(135deg, ${(p) => p.$fill}) border-box;
`;

const scenes = ["Off", "Dim", "Bright"].flatMap((level) =>
  ["House", "Living Room", "Bedroom"].map((room) => `${room}\n${level}`)
);

const palettes = [
  ["Sunset", "#ff0000, #ffcd5c 50%, #ffcd5c"],
  ["Meadow", "#42933a, #ffe8b8 50%, #e0ffff"],
  ["Beach", "#e6dcac, #f5f2e8 52%, #87d9d9"],
  ["Rose", "#c4b7cb, #f8f8f7 50%, #bb6464"],
  ["Teal", "#1f5a66, #ffffff"],
  ["Coral", "#ff6a58, #ffffff"],
  ["Green", "#8dc069, #ffffff"],
  ["Violet", "#856b97, #ffffff"],
];

const Lights = () => (
  <LightsBody>
    <SceneGrid>
      {scenes.map((scene) => (
        <SceneButton type="button" key={scene}>{scene}</SceneButton>
      ))}
    </SceneGrid>
    <SectionTitle>Room Color &amp; Brightness</SectionTitle>
    <LightRooms>
      {["Bedroom", "Living Room"].map((room) => {
        const id = `brightness-${room.replace(" ", "-").toLowerCase()}`;
        return (
          <LightRoom key={room}>
            <RoomLabel htmlFor={id}>{room}</RoomLabel>
            <Brightness id={id} type="range" defaultValue={51} />
            <Swatches>
              {palettes.map(([name, fill]) => (
                <Swatch type="button" key={name} aria-label={name} $fill={fill} />
              ))}
            </Swatches>
          </LightRoom>
        );
      })}
    </LightRooms>
  </LightsBody>
);

export default function App() {
  return (
    <>
      <GlobalStyle />
      <Page>
        <Panel><Nav active="home" /><TrafficMap /></Panel>
        <Panel><Nav active="sun" /><Weather /></Panel>
        <Panel><Nav active="columns" /><Shades /></Panel>
        <Panel><Nav active="bulb" /><Lights /></Panel>
      </Page>
    </>
  );
}
